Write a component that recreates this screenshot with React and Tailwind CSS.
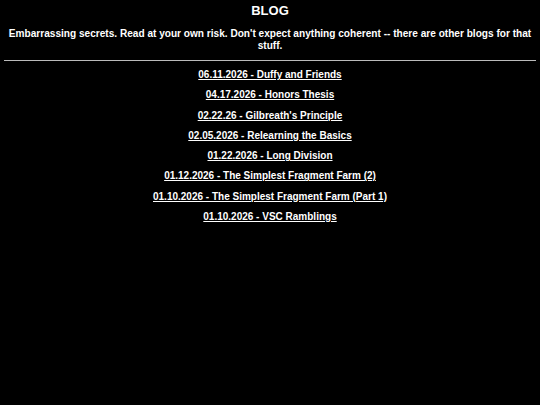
import React from 'react';

const posts = [
  '06.11.2026 - Duffy and Friends',
  '04.17.2026 - Honors Thesis',
  "02.22.26 - Gilbreath's Principle",
  '02.05.2026 - Relearning the Basics',
  '01.22.2026 - Long Division',
  '01.12.2026 - The Simplest Fragment Farm (2)',
  '01.10.2026 - The Simplest Fragment Farm (Part 1)',
  '01.10.2026 - VSC Ramblings',
];

export default function App() {
  return (
    <div className="min-h-[405px] bg-black text-white font-bold text-center font-['Liberation_Sans',Arial,sans-serif] px-1">
      <h1 className="pt-[3px] text-[13px] leading-[16px]">BLOG</h1>
      <p className="mt-[9px] text-[10.1px] leading-[12px]">
        Embarrassing secrets. Read at your own risk. Don't expect anything coherent -- there are other blogs for that stuff.
      </p>
      <hr className="mt-[8px] border-t border-[#bbbbbb]" />
      <ul className="mt-[8px] flex flex-col gap-[8px] text-[10px] leading-[12.3px]">
        {posts.map((p) => (
          <li key={p}>
            <a href="#" className="underline">{p}</a>
          </li>
        ))}
      </ul>
    </div>
  );
}
